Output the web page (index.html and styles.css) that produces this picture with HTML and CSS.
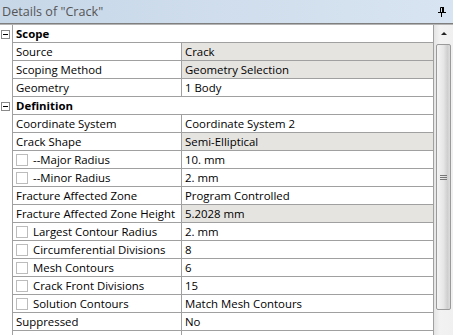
FILE: index.html
```html
<!DOCTYPE html>
<html lang="en">
<head>
  <meta charset="UTF-8">
  <title>Details of "Crack"</title>
  <link rel="stylesheet" href="styles.css">
</head>
<body>
  <div class="panel">
    <div class="titlebar">
      <span class="title">Details of "Crack"</span>
      <svg class="pin" width="8" height="10" viewBox="0 0 8 10">
        <path d="M2.5 0.5h3v5h-3z" fill="none" stroke="#000" stroke-width="1"/>
        <rect x="4" y="0" width="2" height="6" fill="#000"/>
        <rect x="0" y="5" width="8" height="1" fill="#000"/>
        <rect x="3" y="6" width="1" height="4" fill="#000"/>
      </svg>
    </div>

    <div class="body">
      <div class="grid">
        <div class="row group"><div class="gutter"><span class="toggle"></span></div><div class="cell span">Scope</div></div>
        <div class="row"><div class="gutter"></div><div class="cell prop">Source</div><div class="cell val shaded">Crack</div></div>
        <div class="row"><div class="gutter"></div><div class="cell prop">Scoping Method</div><div class="cell val shaded">Geometry Selection</div></div>
        <div class="row"><div class="gutter"></div><div class="cell prop">Geometry</div><div class="cell val">1 Body</div></div>

        <div class="row group"><div class="gutter"><span class="toggle"></span></div><div class="cell span">Definition</div></div>
        <div class="row"><div class="gutter"></div><div class="cell prop">Coordinate System</div><div class="cell val">Coordinate System 2</div></div>
        <div class="row"><div class="gutter"></div><div class="cell prop">Crack Shape</div><div class="cell val shaded">Semi-Elliptical</div></div>
        <div class="row"><div class="gutter"></div><div class="cell prop"><span class="check"></span>--Major Radius</div><div class="cell val">10. mm</div></div>
        <div class="row"><div class="gutter"></div><div class="cell prop"><span class="check"></span>--Minor Radius</div><div class="cell val">2. mm</div></div>
        <div class="row"><div class="gutter"></div><div class="cell prop">Fracture Affected Zone</div><div class="cell val">Program Controlled</div></div>
        <div class="row"><div class="gutter"></div><div class="cell prop">Fracture Affected Zone Height</div><div class="cell val shaded">5.2028 mm</div></div>
        <div class="row"><div class="gutter"></div><div class="cell prop"><span class="check"></span>Largest Contour Radius</div><div class="cell val">2. mm</div></div>
        <div class="row"><div class="gutter"></div><div class="cell prop"><span class="check"></span>Circumferential Divisions</div><div class="cell val">8</div></div>
        <div class="row"><div class="gutter"></div><div class="cell prop"><span class="check"></span>Mesh Contours</div><div class="cell val">6</div></div>
        <div class="row"><div class="gutter"></div><div class="cell prop"><span class="check"></span>Crack Front Divisions</div><div class="cell val">15</div></div>
        <div class="row"><div class="gutter"></div><div class="cell prop"><span class="check"></span>Solution Contours</div><div class="cell val">Match Mesh Contours</div></div>
        <div class="row"><div class="gutter"></div><div class="cell prop">Suppressed</div><div class="cell val">No</div></div>
        <div class="row"><div class="gutter"></div><div class="cell prop"></div><div class="cell val"></div></div>
      </div>

      <div class="scrollbar">
        <div class="arrow"></div>
        <div class="thumb"><span class="grip"></span></div>
      </div>
    </div>
  </div>
</body>
</html>
```

FILE: styles.css
```css
* {
  box-sizing: border-box;
}

body {
  margin: 0;
  background: #ffffff;
  font-family: 'Open Sans', sans-serif;
  font-size: 11.4px;
  color: #000;
}

.panel {
  width: 453px;
  height: 335px;
  overflow: hidden;
}

.titlebar {
  height: 24px;
  display: flex;
  align-items: center;
  justify-content: space-between;
  padding: 0 7px 0 2px;
  background: linear-gradient(to right, #c7d7e8, #d8e4f1);
  border-bottom: 1px solid #7f7f7f;
  box-shadow: 0 1px 0 #b4b4b4;
}

.title {
  font-size: 12.6px;
  color: #555;
}

.pin {
  display: block;
}

.body {
  display: flex;
  margin-top: 1px;
}

.grid {
  width: 434px;
  border-right: 1px solid #a0a0a0;
}

.row {
  display: grid;
  grid-template-columns: 13px 169px 1fr;
  height: 18px;
}

.gutter {
  border-right: 1px solid #a0a0a0;
  display: flex;
  align-items: center;
  justify-content: center;
}

.cell {
  border-bottom: 1px solid #a0a0a0;
  padding: 0 3px;
  display: flex;
  align-items: center;
  white-space: nowrap;
  overflow: hidden;
  line-height: 17px;
}

.prop {
  border-right: 1px solid #a0a0a0;
}

.span {
  grid-column: 2 / 4;
  font-weight: bold;
}

.shaded {
  background: #e6e4e0;
}

.toggle {
  width: 9px;
  height: 9px;
  border: 1px solid #8a8a8a;
  background: #fff;
  position: relative;
  margin-right: 1px;
}

.toggle::after {
  content: "";
  position: absolute;
  left: 1px;
  top: 3px;
  width: 5px;
  height: 1px;
  background: #000;
}

.check {
  width: 12px;
  height: 12px;
  border: 1px solid #bcbcbc;
  background: #fff;
  margin-right: 5px;
  flex: none;
}

.scrollbar {
  width: 19px;
  height: 312px;
  background: linear-gradient(to right, #e4e4e4, #f2f2f2 30%, #f0f0f0);
  display: flex;
  flex-direction: column;
  align-items: center;
  padding-top: 7px;
}

.arrow {
  width: 0;
  height: 0;
  border-left: 3px solid transparent;
  border-right: 3px solid transparent;
  border-bottom: 3px solid #222;
  margin-bottom: 9px;
}

.thumb {
  width: 15px;
  height: 266px;
  border: 1px solid #9a9a9a;
  border-radius: 2px;
  background: linear-gradient(to right, #f4f4f4, #e6e6e6 50%, #cfcfcf 80%, #dcdcdc);
  display: flex;
  align-items: center;
  justify-content: center;
}

.grip {
  width: 7px;
  height: 5px;
  border-top: 1px solid #777;
  border-bottom: 1px solid #777;
  position: relative;
}

.grip::after {
  content: "";
  position: absolute;
  left: 0;
  top: 1px;
  width: 7px;
  height: 1px;
  background: #777;
}
```
